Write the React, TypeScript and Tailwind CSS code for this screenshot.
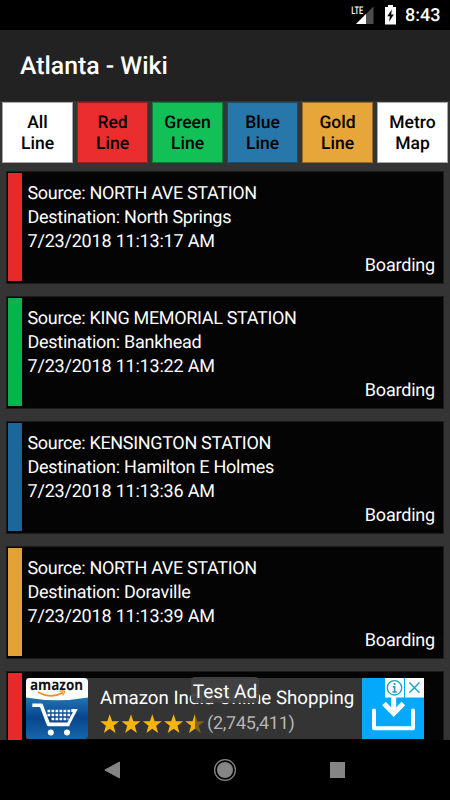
type Tab = {
  top: string;
  bottom: string;
  color: string;
};

type Train = {
  source: string;
  destination: string;
  time: string;
  color: string;
};

const tabs: Tab[] = [
  { top: 'All', bottom: 'Line', color: 'bg-white' },
  { top: 'Red', bottom: 'Line', color: 'bg-[#ea2e2f]' },
  { top: 'Green', bottom: 'Line', color: 'bg-[#12c057]' },
  { top: 'Blue', bottom: 'Line', color: 'bg-[#2777aa]' },
  { top: 'Gold', bottom: 'Line', color: 'bg-[#e7a63a]' },
  { top: 'Metro', bottom: 'Map', color: 'bg-white' },
];

const trains: Train[] = [
  { source: 'NORTH AVE STATION', destination: 'North Springs', time: '7/23/2018 11:13:17 AM', color: 'bg-[#e62a2b]' },
  { source: 'KING MEMORIAL STATION', destination: 'Bankhead', time: '7/23/2018 11:13:22 AM', color: 'bg-[#04b54b]' },
  { source: 'KENSINGTON STATION', destination: 'Hamilton E Holmes', time: '7/23/2018 11:13:36 AM', color: 'bg-[#19679b]' },
  { source: 'NORTH AVE STATION', destination: 'Doraville', time: '7/23/2018 11:13:39 AM', color: 'bg-[#e4a236]' },
];

const StatusBar = () => (
  <div className="h-[30px] shrink-0 bg-black flex justify-end items-start pr-[10px] text-white">
    <svg width="24" height="30" viewBox="0 0 24 30" className="mr-[10px]">
      <path d="M22.5 6.5V24H5z" fill="#4d4d4d" />
      <path d="M15 14V24H5z" fill="#fff" />
      <path d="M0 4h13v10.5H0z" fill="#000" />
      <text x="0.3" y="14" fontFamily="Roboto" fontSize="10.5" fontWeight="500" fill="#fff" textLength="12" lengthAdjust="spacingAndGlyphs">
        LTE
      </text>
    </svg>
    <svg width="11" height="30" viewBox="0 0 11 30" className="mr-[9px]">
      <path d="M3 5h5v2h3v17.5H0V7h3z" fill="#fff" />
      <path d="M6.8 9.5 2.3 16.3h2.6l-.8 5.4 4.7-7.2H6.2z" fill="#000" />
    </svg>
    <span className="text-[18px] leading-[32px] font-medium w-[35px] text-right whitespace-nowrap">8:43</span>
  </div>
);

const LineTab: React.FC<{ tab: Tab }> = ({ tab }) => (
  <div className={`${tab.color} h-[61px] flex-1 flex flex-col items-center justify-center border border-black/35 text-black text-[17.5px] leading-[21px] font-medium pt-[3px]`}>
    <span>{tab.top}</span>
    <span>{tab.bottom}</span>
  </div>
);

const TrainCard: React.FC<{ train: Train }> = ({ train }) => (
  <div className="h-[113px] shrink-0 bg-[#040404] border border-[#1c1c1c] p-[1px] flex text-white">
    <div className={`${train.color} w-[14px] mb-px`} />
    <div className="flex-1 flex flex-col pl-[5.5px] pt-[9px] pr-[7px] text-[18px] leading-[24px] whitespace-nowrap tracking-[-0.2px]">
      <span className="tracking-[-0.33px]">Source: {train.source}</span>
      <span className="tracking-[-0.26px]">Destination: {train.destination}</span>
      <span>{train.time}</span>
      <span className="text-right">Boarding</span>
    </div>
  </div>
);

const AmazonIcon = () => (
  <svg width="62" height="61" viewBox="0 0 62 61" className="shrink-0 overflow-visible">
    <defs>
      <linearGradient id="amazonBlue" x1="0" y1="0" x2="0" y2="1">
        <stop offset="0.3" stopColor="#2278b6" />
        <stop offset="0.65" stopColor="#08458d" />
        <stop offset="1" stopColor="#1766a8" />
      </linearGradient>
      <clipPath id="amazonClip">
        <rect width="62" height="61" rx="4" />
      </clipPath>
    </defs>
    <g clipPath="url(#amazonClip)">
      <rect width="62" height="61" fill="url(#amazonBlue)" />
      <path d="M0 0h62v19.5Q31 25 0 19.5z" fill="#fff" />
    </g>
    <text x="4" y="12.3" fontFamily="Open Sans" fontSize="15" fontWeight="700" fill="#111" textLength="53" lengthAdjust="spacingAndGlyphs">
      amazon
    </text>
    <path d="M12 14Q25 21.5 37 14.5" fill="none" stroke="#f28c1d" strokeWidth="1.5" />
    <path d="M33.5 13.3q5-1 5 0 0 2-1.8 4" fill="none" stroke="#f28c1d" strokeWidth="1.2" />
    <path d="M6.3 27.3h9L22.5 46.4H43.3" fill="none" stroke="#fff" strokeWidth="3.6" strokeLinejoin="round" />
    <path d="M41.8 47 49.3 32.6h-4" fill="none" stroke="#fff" strokeWidth="3" />
    <g stroke="#fff" strokeWidth="2.7" strokeDasharray="2.7 1.3">
      <path d="M21.5 33h23M21.5 37h22.7M25.5 41h17" />
    </g>
    <circle cx="24.8" cy="54.6" r="3" fill="#fff" />
    <circle cx="41" cy="54.6" r="3" fill="#fff" />
  </svg>
);

const STAR = 'M10 0.3 12.4 7.2H19.5L13.8 11.7 15.9 19 10 14.7 4.1 19 6.2 11.7 0.5 7.2H7.6z';

const Stars = () => (
  <svg width="107" height="20" viewBox="0 0 107 20" className="mt-[2px]">
    <defs>
      <linearGradient id="halfStar">
        <stop offset="0.5" stopColor="#f9b50c" />
        <stop offset="0.5" stopColor="#80631f" />
      </linearGradient>
    </defs>
    {[0, 1, 2, 3, 4].map((i) => (
      <path key={i} d={STAR} transform={`translate(${i * 21.3 - 0.3} 0)`} fill={i === 4 ? 'url(#halfStar)' : '#f9b50c'} />
    ))}
  </svg>
);

const InstallIcon = () => (
  <svg width="62" height="61" viewBox="0 0 62 61" className="shrink-0 bg-[#04a9fb]">
    <path d="M12 32.5v17.7h39V32.5" fill="none" stroke="#fff" strokeWidth="4" strokeLinecap="round" strokeLinejoin="round" />
    <path d="M31.7 16v19" stroke="#fff" strokeWidth="5" />
    <path d="M22 25.5l9.7 10L41.4 25.5" fill="none" stroke="#fff" strokeWidth="5" />
    <path d="M23 0h19v19.5H23zM43 0h19v19.5H43z" fill="#fff" />
    <circle cx="32.5" cy="9.8" r="7.2" fill="none" stroke="#1aa3c2" strokeWidth="1.3" />
    <path d="M32.6 5v2M30.8 8.8h1.8v5M30.5 14h4.3" fill="none" stroke="#1aa3c2" strokeWidth="1.7" />
    <path d="M47.3 4.5 57.5 14.8M57.5 4.5 47.3 14.8" stroke="#1aa3c2" strokeWidth="1.4" />
  </svg>
);

const AdBanner = () => (
  <div className="absolute left-[26px] bottom-[1px] w-[398px] h-[61px] bg-[#343434] flex">
    <AmazonIcon />
    <div className="flex-1 pl-[12px] pt-[8px] whitespace-nowrap">
      <div className="text-[18.7px] leading-[24px] text-white">Amazon India Online Shopping</div>
      <div className="flex items-center h-[26px]">
        <Stars />
        <span className="text-[18px] leading-[24px] pt-[2px] tracking-[-0.25px] text-[#b5b5b5]">(2,745,411)</span>
      </div>
    </div>
    <InstallIcon />
    <div className="absolute left-[165px] top-[-1px] w-[68px] h-[26px] rounded-[4px] bg-[#424242]/95 text-white text-[19px] leading-[29px] text-center whitespace-nowrap">
      Test Ad
    </div>
  </div>
);

const NavBar = () => (
  <div className="h-[60px] shrink-0 bg-black flex items-center justify-between pl-[104px] pr-[105px]">
    <svg width="16" height="18" viewBox="0 0 16 18">
      <path d="M15.5 1v16L0.8 9z" fill="#858585" stroke="#858585" strokeLinejoin="round" />
    </svg>
    <svg width="24" height="24" viewBox="0 0 24 24">
      <circle cx="12" cy="12" r="10.4" fill="none" stroke="#858585" strokeWidth="1.3" />
      <circle cx="12" cy="12" r="8" fill="#858585" />
    </svg>
    <div className="w-[15px] h-[16px] bg-[#858585]" />
  </div>
);

export default function App() {
  return (
    <div className="w-[450px] h-[800px] flex flex-col overflow-hidden bg-[#343434] font-['Roboto',sans-serif] [text-rendering:geometricPrecision]">
      <StatusBar />
      <header className="h-[71px] shrink-0 bg-[#222] pl-[20px] text-white text-[24.8px] leading-[73px] font-medium">
        Atlanta - Wiki
      </header>
      <nav className="shrink-0 flex gap-[4px] px-[2px] pt-[1px]">
        {tabs.map((tab) => (
          <LineTab key={tab.top} tab={tab} />
        ))}
      </nav>
      <main className="relative flex-1 min-h-0 overflow-hidden pt-[8px] px-[6px] flex flex-col gap-[12px]">
        {trains.map((train) => (
          <TrainCard key={train.time} train={train} />
        ))}
        <div className="h-[113px] shrink-0 bg-[#040404] border border-[#1c1c1c] p-[1px] flex">
          <div className="bg-[#e62a2b] w-[14px]" />
        </div>
        <AdBanner />
      </main>
      <NavBar />
    </div>
  );
}
